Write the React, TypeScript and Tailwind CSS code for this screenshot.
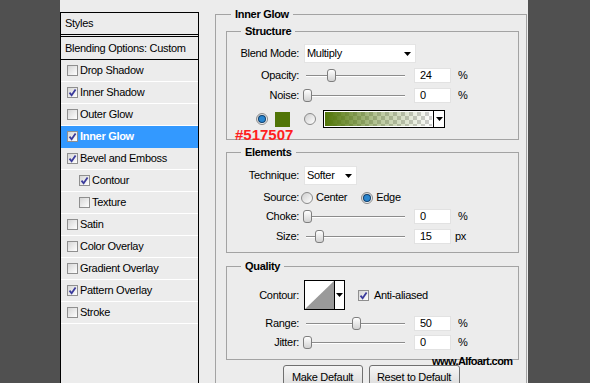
import React from "react";

function Check({ on }: { on: boolean }) {
  return (
    <span className="flex h-[11px] w-[11px] shrink-0 items-center justify-center border border-[#8f8f8f] bg-linear-to-br from-[#d6d6d6] to-white">
      {on && (
        <svg width="9" height="9" viewBox="0 0 9 9">
          <path d="M1.5 4.6 L3.6 7.2 L7.6 1.4" fill="none" stroke="#3b3b9c" strokeWidth="1.8" />
        </svg>
      )}
    </span>
  );
}

function Radio({ on }: { on: boolean }) {
  return (
    <span className="flex h-[12px] w-[12px] shrink-0 items-center justify-center rounded-full border border-[#8a8a8a] bg-linear-to-br from-[#cfcfcf] to-white">
      {on && <span className="h-[6px] w-[6px] rounded-full bg-[#2a86cf] ring-1 ring-[#0d3f6e]" />}
    </span>
  );
}

function Arrow() {
  return (
    <svg width="7" height="4" viewBox="0 0 7 4">
      <path d="M0 0h7L3.5 4z" fill="#000" />
    </svg>
  );
}

function Slider({ pos }: { pos: number }) {
  return (
    <div className="relative h-[15px] w-[104px]">
      <div className="absolute left-[2px] right-[3px] top-[7px] h-[2px] border-t border-b border-t-[#8c8c8c] border-b-white" />
      <div
        className="absolute top-[1px] h-[13px] w-[9px] rounded-[3px] border border-[#7e7e7e] bg-linear-to-b from-white to-[#d2d2d2]"
        style={{ left: pos - 4 }}
      />
    </div>
  );
}

function Field({ value }: { value: string }) {
  return (
    <div className="ml-[6px] flex h-[15px] w-[37px] items-center border border-[#e2e2e2] bg-white pl-[5px] leading-none">
      {value}
    </div>
  );
}

function Label({ children }: { children: React.ReactNode }) {
  return <div className="w-[72px] shrink-0 text-right leading-none">{children}</div>;
}

function SliderRow({ label, pos, value, unit, cls }: { label: string; pos: number; value: string; unit: string; cls: string }) {
  return (
    <div className={`flex h-[15px] items-center ${cls}`}>
      <Label>{label}</Label>
      <div className="ml-[5px] flex items-center">
        <Slider pos={pos} />
        <Field value={value} />
        <span className={`leading-none ${unit === "px" ? "ml-[4px]" : "ml-[7px]"}`}>{unit}</span>
      </div>
    </div>
  );
}

const styles = [
  { label: "Drop Shadow", on: false },
  { label: "Inner Shadow", on: true },
  { label: "Outer Glow", on: false },
  { label: "Inner Glow", on: true, active: true },
  { label: "Bevel and Emboss", on: true },
  { label: "Contour", on: true, indent: true },
  { label: "Texture", on: false, indent: true },
  { label: "Satin", on: false },
  { label: "Color Overlay", on: false },
  { label: "Gradient Overlay", on: false },
  { label: "Pattern Overlay", on: true },
  { label: "Stroke", on: false },
];

function Legend({ children, ml }: { children: React.ReactNode; ml: string }) {
  return <legend className={`${ml} px-[4px] text-[11px] font-bold leading-[14px]`}>{children}</legend>;
}

export default function App() {
  return (
    <div className="relative flex h-[383px] w-[590px] overflow-hidden bg-[#505050] font-['Liberation_Sans',Arial,sans-serif] text-[11px] tracking-[-0.3px] text-black">
      <div className="ml-[60px] flex h-full w-[468px] bg-[#ececec]">
        {/* Styles list */}
        <div className="mt-[12px] flex h-[371px] w-[139px] shrink-0 flex-col border-x border-t border-black">
          <div className="flex h-[24px] items-center border-b-[3px] border-double border-black pl-[4px] pb-[1px]">Styles</div>
          <div className="flex h-[23px] items-center border-b border-black pl-[4px]">Blending Options: Custom</div>
          {styles.map((s) => (
            <div
              key={s.label}
              className={`flex h-[22px] items-center gap-[2px] border-b ${s.indent ? "pl-[18px]" : "pl-[6px]"} ${
                s.active ? "border-[#3399ff] bg-[#3399ff] font-bold text-white" : "border-white"
              }`}
            >
              <Check on={s.on} />
              <span>{s.label}</span>
            </div>
          ))}
          <div className="flex-1" />
        </div>

        {/* Right panel */}
        <div className="flex-1">
          <fieldset className="ml-[16px] mt-[7px] w-[312px] border border-[#a3a3a3] pb-[20px]">
            <Legend ml="ml-[15px]">Inner Glow</Legend>

            {/* Structure */}
            <fieldset className="ml-[10px] mt-[3px] w-[293px] border border-[#a3a3a3]">
              <Legend ml="ml-[14px]">Structure</Legend>
              <div className="pb-[11px] pt-[6px]">
                <div className="flex h-[19px] items-center">
                  <Label>Blend Mode:</Label>
                  <div className="ml-[5px] flex h-[19px] w-[112px] items-center justify-between border border-[#e4e4e4] bg-white pl-[2px] pr-[4px]">
                    <span>Multiply</span>
                    <Arrow />
                  </div>
                </div>
                <SliderRow label="Opacity:" pos={27} value="24" unit="%" cls="mt-[5px]" />
                <SliderRow label="Noise:" pos={3} value="0" unit="%" cls="mt-[5px]" />
                <div className="mt-[7px] flex h-[18px] items-center pl-[29px]">
                  <Radio on />
                  <div className="ml-[7px] h-[15px] w-[15px] bg-[#517507]" />
                  <div className="ml-[14px]">
                    <Radio on={false} />
                  </div>
                  <div className="ml-[7px] flex h-[18px] w-[122px] border border-black">
                    <div className="flex-1 border border-white bg-[repeating-conic-gradient(#cfcfcf_0_25%,#ffffff_0_50%)] [background-size:8px_8px]">
                      <div className="h-full w-full bg-linear-to-r from-[#517507] via-[#517507]/40 to-transparent" />
                    </div>
                    <div className="flex w-[11px] items-center justify-center border-l border-black bg-white">
                      <Arrow />
                    </div>
                  </div>
                </div>
              </div>
            </fieldset>

            {/* Elements */}
            <fieldset className="ml-[10px] mt-[5px] w-[293px] border border-[#a3a3a3]">
              <Legend ml="ml-[14px]">Elements</Legend>
              <div className="pb-[8px] pt-[7px]">
                <div className="flex h-[19px] items-center">
                  <Label>Technique:</Label>
                  <div className="ml-[5px] flex h-[19px] w-[53px] items-center justify-between border border-[#e4e4e4] bg-white pl-[2px] pr-[4px]">
                    <span>Softer</span>
                    <Arrow />
                  </div>
                </div>
                <div className="mt-[6px] flex h-[13px] items-center">
                  <Label>Source:</Label>
                  <div className="ml-[2px] flex items-center">
                    <Radio on={false} />
                    <span className="ml-[3px] leading-none">Center</span>
                    <div className="ml-[14px]">
                      <Radio on />
                    </div>
                    <span className="ml-[3px] leading-none">Edge</span>
                  </div>
                </div>
                <SliderRow label="Choke:" pos={3} value="0" unit="%" cls="mt-[5px]" />
                <SliderRow label="Size:" pos={15} value="15" unit="px" cls="mt-[5px]" />
              </div>
            </fieldset>

            {/* Quality */}
            <fieldset className="ml-[10px] mt-[6px] w-[293px] border border-[#a3a3a3]">
              <Legend ml="ml-[14px]">Quality</Legend>
              <div className="pb-[9px] pt-[7px]">
                <div className="flex h-[30px] items-center">
                  <Label>Contour:</Label>
                  <div className="ml-[5px] flex h-[30px] w-[41px] border border-black bg-white">
                    <svg width="29" height="28" viewBox="0 0 29 28" className="shrink-0">
                      <path d="M0 28 L29 0 L29 28 Z" fill="#9a9a9a" />
                    </svg>
                    <div className="flex flex-1 items-center justify-center border-l border-black">
                      <Arrow />
                    </div>
                  </div>
                  <div className="ml-[13px]">
                    <Check on />
                  </div>
                  <span className="ml-[5px] leading-none">Anti-aliased</span>
                </div>
                <SliderRow label="Range:" pos={52} value="50" unit="%" cls="mt-[6px]" />
                <SliderRow label="Jitter:" pos={3} value="0" unit="%" cls="mt-[4px]" />
              </div>
            </fieldset>

            <div className="mt-[5px] flex justify-center gap-[6px]">
              <button className="h-[24px] w-[80px] rounded-[3px] border border-[#707070] bg-linear-to-b from-[#f6f6f6] to-[#d9d9d9] text-[11px] tracking-[-0.3px]">
                Make Default
              </button>
              <button className="h-[24px] w-[91px] rounded-[3px] border border-[#707070] bg-linear-to-b from-[#f6f6f6] to-[#d9d9d9] text-[11px] tracking-[-0.3px]">
                Reset to Default
              </button>
            </div>
          </fieldset>
        </div>
      </div>

      <div className="absolute left-[235px] top-[127px] text-[15px] font-bold leading-[15px] tracking-normal text-[#ff1f1f]">#517507</div>
      <div className="absolute left-[432px] top-[355px] text-[11px] font-bold leading-[13px] tracking-[-0.6px] text-black">
        www.Alfoart.com
      </div>
    </div>
  );
}
